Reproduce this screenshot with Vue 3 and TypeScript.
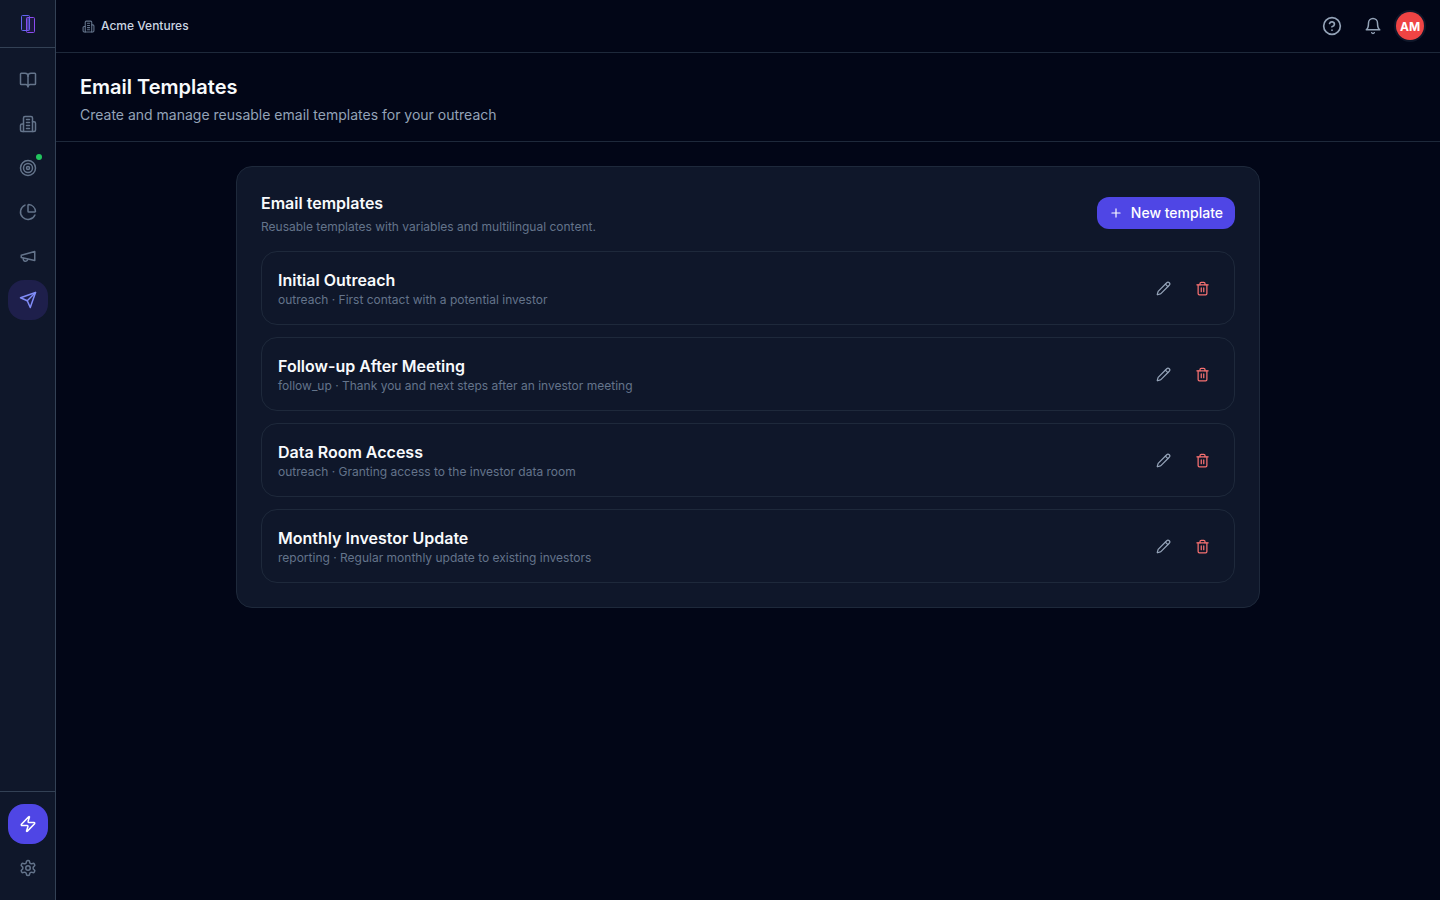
<script setup lang="ts">
interface NavItem {
  label: string
  icon: string[]
  active?: boolean
  dot?: boolean
}

interface Template {
  name: string
  category: string
  description: string
}

const building = [
  'M6 22V4a2 2 0 0 1 2-2h8a2 2 0 0 1 2 2v18Z',
  'M6 12H4a2 2 0 0 0-2 2v6a2 2 0 0 0 2 2h2',
  'M18 9h2a2 2 0 0 1 2 2v9a2 2 0 0 1-2 2h-2',
  'M10 6h4M10 10h4M10 14h4M10 18h4',
]

const navItems: NavItem[] = [
  {
    label: 'Data room',
    icon: [
      'M12 7v14',
      'M3 18a1 1 0 0 1-1-1V4a1 1 0 0 1 1-1h5a4 4 0 0 1 4 4 4 4 0 0 1 4-4h5a1 1 0 0 1 1 1v13a1 1 0 0 1-1 1h-6a3 3 0 0 0-3 3 3 3 0 0 0-3-3z',
    ],
  },
  { label: 'Companies', icon: building },
  {
    label: 'Targets',
    dot: true,
    icon: [
      'M22 12a10 10 0 1 1-20 0 10 10 0 0 1 20 0Z',
      'M18 12a6 6 0 1 1-12 0 6 6 0 0 1 12 0Z',
      'M14 12a2 2 0 1 1-4 0 2 2 0 0 1 4 0Z',
    ],
  },
  {
    label: 'Analytics',
    icon: [
      'M21 12c.552 0 1.005-.449.95-.998a10 10 0 0 0-8.953-8.951c-.55-.055-.998.398-.998.95v8a1 1 0 0 0 1 1z',
      'M21.21 15.89A10 10 0 1 1 8 2.83',
    ],
  },
  { label: 'Campaigns', icon: ['m3 11 18-5v12L3 14v-3z', 'M11.6 16.8a3 3 0 1 1-5.8-1.6'] },
  { label: 'Outreach', active: true, icon: ['m22 2-7 20-4-9-9-4Z', 'M22 2 11 13'] },
]

const templates: Template[] = [
  { name: 'Initial Outreach', category: 'outreach', description: 'First contact with a potential investor' },
  { name: 'Follow-up After Meeting', category: 'follow_up', description: 'Thank you and next steps after an investor meeting' },
  { name: 'Data Room Access', category: 'outreach', description: 'Granting access to the investor data room' },
  { name: 'Monthly Investor Update', category: 'reporting', description: 'Regular monthly update to existing investors' },
]
</script>

<template>
  <div class="shell">
    <aside class="sidebar">
      <a class="logo" href="#" aria-label="Home">
        <svg class="logo-mark" viewBox="0 0 24 23" aria-hidden="true">
          <rect x="5.5" y="3.5" width="8" height="15" rx="1" fill="#6366f1" fill-opacity="0.08" stroke="#6366f1" />
          <path d="M10.5 5.5h3v13h-3z" fill="#6366f1" fill-opacity="0.45" />
          <rect x="10.5" y="5.5" width="8" height="15" rx="1" fill="#9333ea" fill-opacity="0.1" stroke="#8b4bf0" />
        </svg>
      </a>
      <nav class="nav" aria-label="Main">
        <a
          v-for="item in navItems"
          :key="item.label"
          href="#"
          class="nav-item"
          :class="{ active: item.active }"
          :aria-label="item.label"
        >
          <svg class="icon" viewBox="0 0 24 24" aria-hidden="true">
            <path v-for="d in item.icon" :key="d" :d="d" />
          </svg>
          <span v-if="item.dot" class="dot"></span>
        </a>
      </nav>
      <div class="side-footer">
        <button type="button" class="nav-item quick" aria-label="Quick actions">
          <svg class="icon" viewBox="0 0 24 24" aria-hidden="true">
            <path d="M4 14a1 1 0 0 1-.78-1.63l9.9-10.2a.5.5 0 0 1 .86.46l-1.92 6.02A1 1 0 0 0 13 10h7a1 1 0 0 1 .78 1.63l-9.9 10.2a.5.5 0 0 1-.86-.46l1.92-6.02A1 1 0 0 0 11 14z" />
          </svg>
        </button>
        <a href="#" class="nav-item" aria-label="Settings">
          <svg class="icon" viewBox="0 0 24 24" aria-hidden="true">
            <path d="M12.22 2h-.44a2 2 0 0 0-2 2v.18a2 2 0 0 1-1 1.73l-.43.25a2 2 0 0 1-2 0l-.15-.08a2 2 0 0 0-2.73.73l-.22.38a2 2 0 0 0 .73 2.73l.15.1a2 2 0 0 1 1 1.72v.51a2 2 0 0 1-1 1.74l-.15.09a2 2 0 0 0-.73 2.73l.22.38a2 2 0 0 0 2.73.73l.15-.08a2 2 0 0 1 2 0l.43.25a2 2 0 0 1 1 1.73V20a2 2 0 0 0 2 2h.44a2 2 0 0 0 2-2v-.18a2 2 0 0 1 1-1.73l.43-.25a2 2 0 0 1 2 0l.15.08a2 2 0 0 0 2.73-.73l.22-.39a2 2 0 0 0-.73-2.73l-.15-.08a2 2 0 0 1-1-1.74v-.5a2 2 0 0 1 1-1.74l.15-.09a2 2 0 0 0 .73-2.73l-.22-.38a2 2 0 0 0-2.73-.73l-.15.08a2 2 0 0 1-2 0l-.43-.25a2 2 0 0 1-1-1.73V4a2 2 0 0 0-2-2z" />
            <circle cx="12" cy="12" r="3" />
          </svg>
        </a>
      </div>
    </aside>

    <div class="content">
      <header class="topbar">
        <div class="org">
          <svg class="icon org-icon" viewBox="0 0 24 24" aria-hidden="true">
            <path v-for="d in building" :key="d" :d="d" />
          </svg>
          <span>Acme Ventures</span>
        </div>
        <div class="top-actions">
          <button type="button" class="top-button" aria-label="Help">
            <svg class="icon help-icon" viewBox="0 0 24 24" aria-hidden="true">
              <circle cx="12" cy="12" r="10" />
              <path d="M9.09 9a3 3 0 0 1 5.83 1c0 2-3 3-3 3" />
              <path d="M12 17h.01" />
            </svg>
          </button>
          <button type="button" class="top-button bell" aria-label="Notifications">
            <svg class="icon" viewBox="0 0 24 24" aria-hidden="true">
              <path d="M6 8a6 6 0 0 1 12 0c0 7 3 9 3 9H3s3-2 3-9" />
              <path d="M10.3 21a1.94 1.94 0 0 0 3.4 0" />
            </svg>
          </button>
          <button type="button" class="avatar" aria-label="Account">AM</button>
        </div>
      </header>

      <div class="page-head">
        <h1>Email Templates</h1>
        <p>Create and manage reusable email templates for your outreach</p>
      </div>

      <main class="page-body">
        <section class="card">
          <div class="card-head">
            <div>
              <h2>Email templates</h2>
              <p>Reusable templates with variables and multilingual content.</p>
            </div>
            <button type="button" class="primary">
              <svg class="icon plus-icon" viewBox="0 0 24 24" aria-hidden="true">
                <path d="M5 12h14M12 5v14" />
              </svg>
              <span>New template</span>
            </button>
          </div>
          <ul class="list">
            <li v-for="t in templates" :key="t.name" class="row">
              <div>
                <h3>{{ t.name }}</h3>
                <p>{{ t.category }} · {{ t.description }}</p>
              </div>
              <div class="row-actions">
                <button type="button" class="row-button" :aria-label="'Edit ' + t.name">
                  <svg class="icon row-icon" viewBox="0 0 24 24" aria-hidden="true">
                    <path d="M21.174 6.812a1 1 0 0 0-3.986-3.987L3.842 16.174a2 2 0 0 0-.5.83l-1.321 4.352a.5.5 0 0 0 .623.622l4.353-1.32a2 2 0 0 0 .83-.497z" />
                    <path d="m15 5 4 4" />
                  </svg>
                </button>
                <button type="button" class="row-button danger" :aria-label="'Delete ' + t.name">
                  <svg class="icon row-icon" viewBox="0 0 24 24" aria-hidden="true">
                    <path d="M3 6h18" />
                    <path d="M19 6v14c0 1-1 2-2 2H7c-1 0-2-1-2-2V6" />
                    <path d="M8 6V4c0-1 1-2 2-2h4c1 0 2 1 2 2v2" />
                    <path d="M10 11v6M14 11v6" />
                  </svg>
                </button>
              </div>
            </li>
          </ul>
        </section>
      </main>
    </div>
  </div>
</template>

<style>
body {
  background: #020617;
}
</style>

<style scoped>
.shell {
  display: flex;
  min-height: 100vh;
  background: #020617;
  color: #f8fafc;
  font-family: Inter, "Liberation Sans", sans-serif;
}

h1,
h2,
h3,
p,
ul {
  margin: 0;
  padding: 0;
}

button {
  border: 0;
  padding: 0;
  background: none;
  color: inherit;
  font: inherit;
  cursor: pointer;
}

.icon {
  display: block;
  width: 18px;
  height: 18px;
  fill: none;
  stroke: currentColor;
  stroke-width: 2;
  stroke-linecap: round;
  stroke-linejoin: round;
}

.sidebar {
  display: flex;
  flex-direction: column;
  flex: none;
  box-sizing: border-box;
  width: 56px;
  background: #0f172a;
  border-right: 1px solid #334155;
}

.logo {
  display: flex;
  align-items: center;
  height: 47px;
  padding-left: 16px;
  border-bottom: 1px solid #334155;
}

.logo-mark {
  display: block;
  width: 24px;
  height: 23px;
}

.nav {
  display: flex;
  flex: 1;
  flex-direction: column;
  gap: 4px;
  padding: 12px 0 12px 8px;
}

.nav-item {
  position: relative;
  display: flex;
  align-items: center;
  justify-content: center;
  width: 40px;
  height: 40px;
  border-radius: 16px;
  color: #64748b;
}

.nav-item.active {
  background: #1e1f4b;
  color: #818cf8;
}

.dot {
  position: absolute;
  top: 6px;
  right: 6px;
  width: 6px;
  height: 6px;
  border-radius: 50%;
  background: #22c55e;
}

.side-footer {
  display: flex;
  flex-direction: column;
  gap: 4px;
  padding: 12px 0 12px 8px;
  border-top: 1px solid #334155;
}

.nav-item.quick {
  background: #4f46e5;
  color: #fff;
}

.content {
  display: flex;
  flex: 1;
  flex-direction: column;
  min-width: 0;
}

.topbar {
  display: flex;
  align-items: center;
  justify-content: space-between;
  height: 52px;
  padding: 0 16px 0 26px;
  border-bottom: 1px solid #1e293b;
}

.org {
  display: flex;
  align-items: center;
  gap: 6px;
  color: #cbd5e1;
  font-size: 12px;
  font-weight: 500;
  line-height: 16px;
}

.org-icon {
  width: 13px;
  height: 13px;
  color: #64748b;
}

.top-actions {
  display: flex;
  align-items: center;
  gap: 4px;
  color: #94a3b8;
}

.top-button {
  display: flex;
  align-items: center;
  justify-content: center;
  width: 36px;
  height: 36px;
}

.top-button.bell {
  width: 38px;
}

.help-icon {
  width: 20px;
  height: 20px;
}

.avatar {
  width: 28px;
  height: 28px;
  border-radius: 50%;
  background: #ef4444;
  box-shadow: 0 0 0 2px #0f172a;
  color: #fff;
  font-size: 12px;
  font-weight: 700;
}

.page-head {
  padding: 20px 24px 16px;
  border-bottom: 1px solid #1e293b;
}

h1 {
  font-size: 20px;
  font-weight: 600;
  line-height: 28px;
}

.page-head p {
  margin-top: 4px;
  color: #94a3b8;
  font-size: 14px;
  line-height: 20px;
}

.page-body {
  padding: 24px;
}

.card {
  box-sizing: border-box;
  max-width: 1024px;
  margin: 0 auto;
  padding: 24px;
  border: 1px solid #1e293b;
  border-radius: 16px;
  background: #0f172a;
}

.card-head {
  display: flex;
  align-items: center;
  justify-content: space-between;
  gap: 16px;
  margin-bottom: 16px;
}

h2,
h3 {
  font-size: 16px;
  font-weight: 600;
  line-height: 24px;
}

.card-head p {
  margin-top: 4px;
}

.card p {
  color: #64748b;
  font-size: 12px;
  line-height: 16px;
}

.primary {
  display: flex;
  align-items: center;
  gap: 8px;
  height: 32px;
  padding: 0 12px;
  border-radius: 12px;
  background: #4f46e5;
  color: #fff;
  font-size: 14px;
  font-weight: 500;
  line-height: 20px;
}

.plus-icon {
  width: 14px;
  height: 14px;
}

.list {
  display: flex;
  flex-direction: column;
  gap: 12px;
  list-style: none;
}

.row {
  display: flex;
  align-items: center;
  justify-content: space-between;
  gap: 16px;
  padding: 16px;
  border: 1px solid #1e293b;
  border-radius: 16px;
}

.row-actions {
  display: flex;
  gap: 8px;
  color: #94a3b8;
}

.row-button {
  display: flex;
  align-items: center;
  justify-content: center;
  width: 31px;
  height: 31px;
}

.row-icon {
  width: 15px;
  height: 15px;
}

.danger {
  color: #f87171;
}
</style>
